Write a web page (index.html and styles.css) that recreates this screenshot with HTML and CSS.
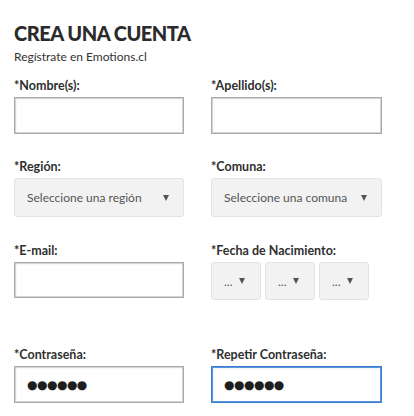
FILE: index.html
```html
<!DOCTYPE html>
<html lang="es">
<head>
<meta charset="utf-8">
<title>Crea una cuenta</title>
<link rel="stylesheet" href="styles.css">
</head>
<body>
<div class="page">
  <h1 class="title">CREA UNA CUENTA</h1>
  <p class="subtitle">Regístrate en Emotions.cl</p>

  <div class="row row-name">
    <div class="field">
      <label class="label">*Nombre(s):</label>
      <div class="input"></div>
    </div>
    <div class="field">
      <label class="label">*Apellido(s):</label>
      <div class="input"></div>
    </div>
  </div>

  <div class="row row-region">
    <div class="field">
      <label class="label">*Región:</label>
      <div class="select"><span class="select-text">Seleccione una región</span><span class="arrow"></span></div>
    </div>
    <div class="field">
      <label class="label">*Comuna:</label>
      <div class="select"><span class="select-text">Seleccione una comuna</span><span class="arrow"></span></div>
    </div>
  </div>

  <div class="row row-mail">
    <div class="field">
      <label class="label">*E-mail:</label>
      <div class="input input-mail"></div>
    </div>
    <div class="field">
      <label class="label">*Fecha de Nacimiento:</label>
      <div class="dates">
        <div class="select select-date"><span class="select-text">...</span><span class="arrow"></span></div>
        <div class="select select-date"><span class="select-text">...</span><span class="arrow"></span></div>
        <div class="select select-date"><span class="select-text">...</span><span class="arrow"></span></div>
      </div>
    </div>
  </div>

  <div class="row row-pass">
    <div class="field">
      <label class="label">*Contraseña:</label>
      <div class="input"><span class="dots">●●●●●●</span></div>
    </div>
    <div class="field">
      <label class="label">*Repetir Contraseña:</label>
      <div class="input input-focus"><span class="dots">●●●●●●</span></div>
    </div>
  </div>
</div>
</body>
</html>
```
FILE: styles.css
```css
html, body {
  margin: 0;
  padding: 0;
  background: #ffffff;
}

body {
  font-family: Lato, "Open Sans", sans-serif;
  color: #2f2f2f;
}

.page {
  width: 368px;
  margin-left: 14px;
  padding-top: 21px;
}

.title {
  margin: 0;
  font-size: 20px;
  line-height: 24px;
  font-weight: 900;
  letter-spacing: -0.5px;
  color: #2b2b2b;
}

.subtitle {
  margin: 4px 0 0;
  font-size: 12px;
  line-height: 16px;
  color: #333;
}

.row {
  display: grid;
  grid-template-columns: 170px 171px;
  column-gap: 27px;
}

.row-name { margin-top: 13px; }
.row-region { margin-top: 25px; }
.row-mail { margin-top: 26px; }
.row-pass { margin-top: 47px; }

.label {
  display: block;
  font-size: 12.5px;
  line-height: 16px;
  font-weight: 700;
  color: #2f2f2f;
  margin-bottom: 3px;
}

.input {
  box-sizing: border-box;
  height: 37px;
  border: 1px solid #a9a9a9;
  box-shadow: inset 0 0 0 1px #d4d4d4, inset 1px 1px 3px rgba(0,0,0,0.08);
  background: #fff;
  display: flex;
  align-items: center;
  padding-left: 12px;
}

.input-mail { height: 36px; }

.input-focus {
  border-color: #3a7bd5;
  box-shadow: inset 0 0 0 1px #5c94e0, inset 1px 1px 3px rgba(0,0,0,0.1);
}

.dots {
  font-family: "DejaVu Sans", sans-serif;
  font-size: 12px;
  color: #1e1e1e;
  letter-spacing: -0.5px;
}

.select {
  box-sizing: border-box;
  height: 39px;
  background: #f2f2f2;
  border: 1px solid #e3e3e3;
  border-radius: 3px;
  display: flex;
  align-items: center;
  padding-left: 12px;
  padding-right: 14px;
  font-size: 12px;
  color: #555;
}

.select-text {
  flex: 1;
}

.arrow {
  width: 0;
  height: 0;
  border-left: 3px solid transparent;
  border-right: 3px solid transparent;
  border-top: 6px solid #555;
}

.dates {
  display: flex;
  gap: 4px;
}

.select-date {
  width: 50px;
  height: 38px;
  padding-left: 12px;
  padding-right: 15px;
}
```
